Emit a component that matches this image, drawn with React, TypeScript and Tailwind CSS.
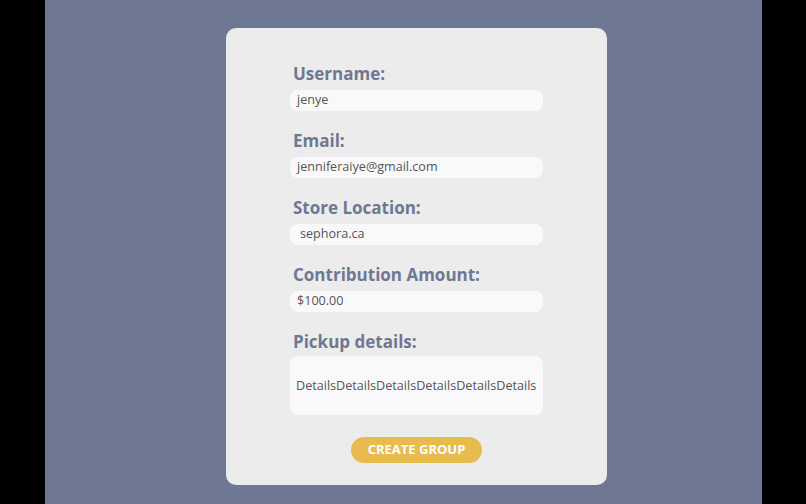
export default function App() {
	const fields = [
		{ label: "Username:", value: "jenye", pad: "pl-[7px]" },
		{ label: "Email:", value: "jenniferaiye@gmail.com", pad: "pl-[7px]" },
		{ label: "Store Location:", value: "sephora.ca", pad: "pl-[10px]" },
		{ label: "Contribution Amount:", value: "$100.00", pad: "pl-[7px]" },
	];

	return (
		<div
			className="flex h-[504px] w-[806px] bg-black"
			style={{ fontFamily: '"Open Sans", "Noto Sans", sans-serif' }}
		>
			<div className="w-[45px]" />
			<div className="flex-1 bg-[#6e7893] pl-[181px] pt-[28px]">
				{/* Form card */}
				<div className="flex h-[457px] w-[381px] flex-col rounded-[10px] bg-[#ececec] pl-[64px] pt-[34px]">
					{fields.map((f) => (
						<div key={f.label} className="mb-[18px] flex flex-col">
							<div className="pl-[3px] text-[17px] font-bold leading-[24px] text-[#6e7893]">
								{f.label}
							</div>
							<div
								className={`mt-[4px] flex h-[21px] w-[253px] items-center rounded-[8px] bg-[#f9f9fb] text-[12.6px] text-[#555] ${f.pad}`}
							>
								{f.value}
							</div>
						</div>
					))}

					<div className="pl-[3px] text-[17px] font-bold leading-[24px] text-[#6e7893]">
						Pickup details:
					</div>
					<div className="mt-[2px] flex h-[59px] w-[253px] items-center rounded-[8px] bg-[#f9f9fb] pl-[6px] pt-[1px] text-[12.6px] text-[#555]">
						DetailsDetailsDetailsDetailsDetailsDetails
					</div>

					<div className="mt-[22px] flex w-[253px] justify-center">
						<button className="h-[26px] w-[131px] rounded-full bg-[#e8bb4f] text-[13px] font-bold text-white">
							CREATE GROUP
						</button>
					</div>
				</div>
			</div>
			<div className="w-[44px]" />
		</div>
	);
}
